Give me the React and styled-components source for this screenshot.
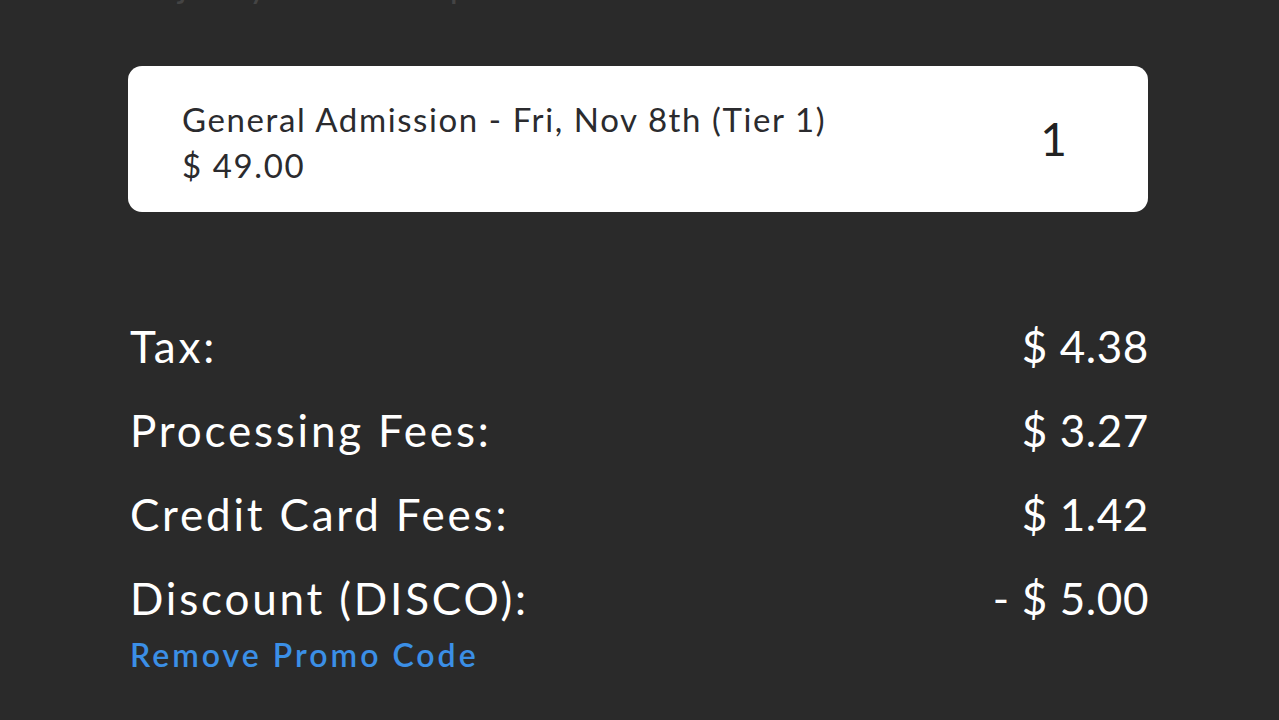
import React from "react";
import styled, { createGlobalStyle } from "styled-components";

const Global = createGlobalStyle`
  html, body { margin: 0; padding: 0; background: #2a2a2a; }
  body { font-family: "Lato", "Noto Sans", sans-serif; overflow: hidden; }
`;

const Page = styled.div`
  width: 1279px;
  height: 720px;
  background: #2a2a2a;
  box-sizing: border-box;
  padding: 0 131px 0 128px;
  display: flex;
  flex-direction: column;
`;

const Heading = styled.h2`
  margin: -34px 0 0 4px;
  height: 36px;
  line-height: 36px;
  font-size: 36px;
  font-weight: 400;
  color: #444;
  white-space: nowrap;
  letter-spacing: 1px;
`;

const TicketCard = styled.div`
  margin-top: 64px;
  height: 146px;
  box-sizing: border-box;
  background: #fff;
  border-radius: 14px;
  display: flex;
  align-items: center;
  justify-content: space-between;
  padding: 6px 81px 0 54px;
`;

const TicketInfo = styled.div`
  display: flex;
  flex-direction: column;
  gap: 6px;
  color: #2b2b2e;
  font-size: 33px;
  line-height: 40px;
  letter-spacing: 1.6px;
`;

const TicketName = styled.div``;

const TicketPrice = styled.div``;

const Qty = styled.div`
  font-size: 46px;
  line-height: 46px;
  color: #222;
  margin-top: -6px;
`;

const Summary = styled.div`
  margin-top: 107px;
  display: flex;
  flex-direction: column;
  gap: 30px;
`;

const Row = styled.div`
  display: flex;
  justify-content: space-between;
  align-items: baseline;
  color: #fff;
  font-size: 44px;
  line-height: 54px;
`;

const Label = styled.span`
  padding-left: 2px;
  letter-spacing: 2.8px;
`;

const Value = styled.span`
  letter-spacing: 0.6px;
  margin-right: -1px;
`;

const Discount = styled.div`
  display: flex;
  flex-direction: column;
`;

const PromoLink = styled.a`
  color: #3b8fe6;
  font-size: 32px;
  font-weight: 600;
  letter-spacing: 3px;
  text-decoration: none;
  padding-left: 2px;
  line-height: 40px;
  margin-top: 10px;
  cursor: pointer;
`;

const rows = [
  ["Tax:", "$ 4.38"],
  ["Processing Fees:", "$ 3.27"],
  ["Credit Card Fees:", "$ 1.42"],
];

export default function App() {
  return (
    <>
      <Global />
      <Page>
        <Heading>Adjust your ticket quantities below</Heading>
        <TicketCard>
          <TicketInfo>
            <TicketName>General Admission - Fri, Nov 8th (Tier 1)</TicketName>
            <TicketPrice>$ 49.00</TicketPrice>
          </TicketInfo>
          <Qty>1</Qty>
        </TicketCard>
        <Summary>
          {rows.map(([l, v]) => (
            <Row key={l}>
              <Label>{l}</Label>
              <Value>{v}</Value>
            </Row>
          ))}
          <Discount>
            <Row>
              <Label>Discount (DISCO):</Label>
              <Value>- $ 5.00</Value>
            </Row>
            <PromoLink>Remove Promo Code</PromoLink>
          </Discount>
        </Summary>
      </Page>
    </>
  );
}
